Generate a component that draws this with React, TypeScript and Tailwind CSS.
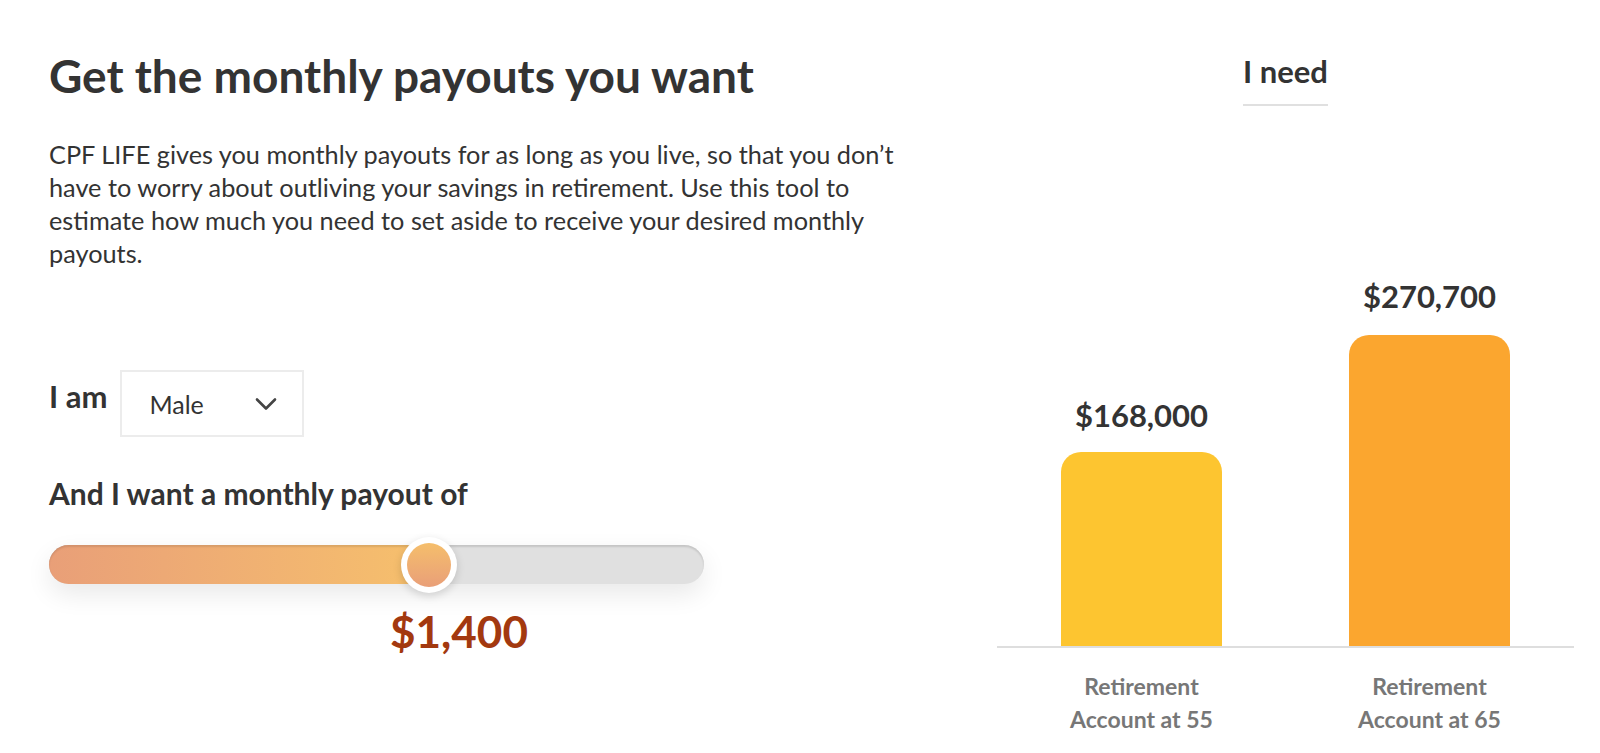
export default function App() {
  const font = { fontFamily: "Lato, 'Noto Sans', sans-serif" };
  return (
    <div style={font} className="w-[1600px] h-[753px] bg-white text-[#333] flex overflow-hidden">
      {/* left: inputs */}
      <div className="pl-[49px] w-[980px]">
        <h1 className="mt-[53px] text-[46px] leading-none font-bold text-[#333]">Get the monthly payouts you want</h1>
        <p className="mt-[39px] w-[880px] text-[25.3px] leading-[33px] text-[#333]">
          CPF LIFE gives you monthly payouts for as long as you live, so that you don’t have to worry about outliving your savings in retirement. Use this tool to estimate how much you need to set aside to receive your desired monthly payouts.
        </p>

        <div className="mt-[100px] flex items-start gap-[13px]">
          <span className="mt-[11px] text-[31px] leading-none font-bold">I am</span>
          <div className="w-[184px] h-[67px] border-2 border-[#ececec] flex items-center justify-between pl-[27px] pr-[25px]">
            <span className="pt-[3px] text-[25px] text-[#333]">Male</span>
            <svg width="22" height="14" viewBox="0 0 22 14" fill="none">
              <path d="M2 2.5l9 9 9-9" stroke="#444" strokeWidth="2.6" strokeLinecap="round" strokeLinejoin="round" />
            </svg>
          </div>
        </div>

        <div className="mt-[41px] text-[30px] leading-none font-bold">And I want a monthly payout of</div>

        <div className="mt-[37px] relative w-[655px] h-[39px] rounded-full bg-[#e0e0e0] shadow-[0_10px_26px_rgba(0,0,0,0.09),inset_0_2px_2px_rgba(0,0,0,0.12)]">
          <div className="h-full w-[380px] rounded-l-full bg-gradient-to-r from-[#e99f78] to-[#f6c06c] shadow-[inset_0_2px_2px_rgba(0,0,0,0.1)]" />
          <div className="absolute left-[352px] top-[-8px] w-[56px] h-[56px] rounded-full bg-white p-[6px] shadow-[0_3px_8px_rgba(0,0,0,0.15)]">
            <div className="w-full h-full rounded-full bg-gradient-to-b from-[#f5be6b] to-[#e99f78]" />
          </div>
        </div>

        <div className="mt-[25px] ml-[341px] text-[44px] leading-none font-bold text-[#a3390f]">$1,400</div>
      </div>

      {/* right: chart */}
      <div className="ml-auto mr-[26px] w-[577px] flex flex-col">
        <div className="mt-[56px] flex justify-center">
          <span className="text-[31px] leading-none font-bold pb-[17px] border-b-2 border-[#e0e0e0]">I need</span>
        </div>
        <div className="h-[542px] border-b-2 border-[#dedede] flex items-end justify-center gap-[127px]">
          <div className="w-[161px] flex flex-col items-center">
            <span className="mb-[21px] text-[31px] leading-none font-bold">$168,000</span>
            <div className="w-full h-[194px] rounded-t-[20px] bg-[#fdc530]" />
          </div>
          <div className="w-[161px] flex flex-col items-center">
            <span className="mb-[23px] text-[31px] leading-none font-bold">$270,700</span>
            <div className="w-full h-[311px] rounded-t-[20px] bg-[#fba62f]" />
          </div>
        </div>
        <div className="mt-[22px] flex justify-center gap-[127px] text-[23px] leading-[33px] font-bold text-[#777] text-center">
          <div className="w-[161px]">Retirement<br />Account at 55</div>
          <div className="w-[161px]">Retirement<br />Account at 65</div>
        </div>
      </div>
    </div>
  );
}
